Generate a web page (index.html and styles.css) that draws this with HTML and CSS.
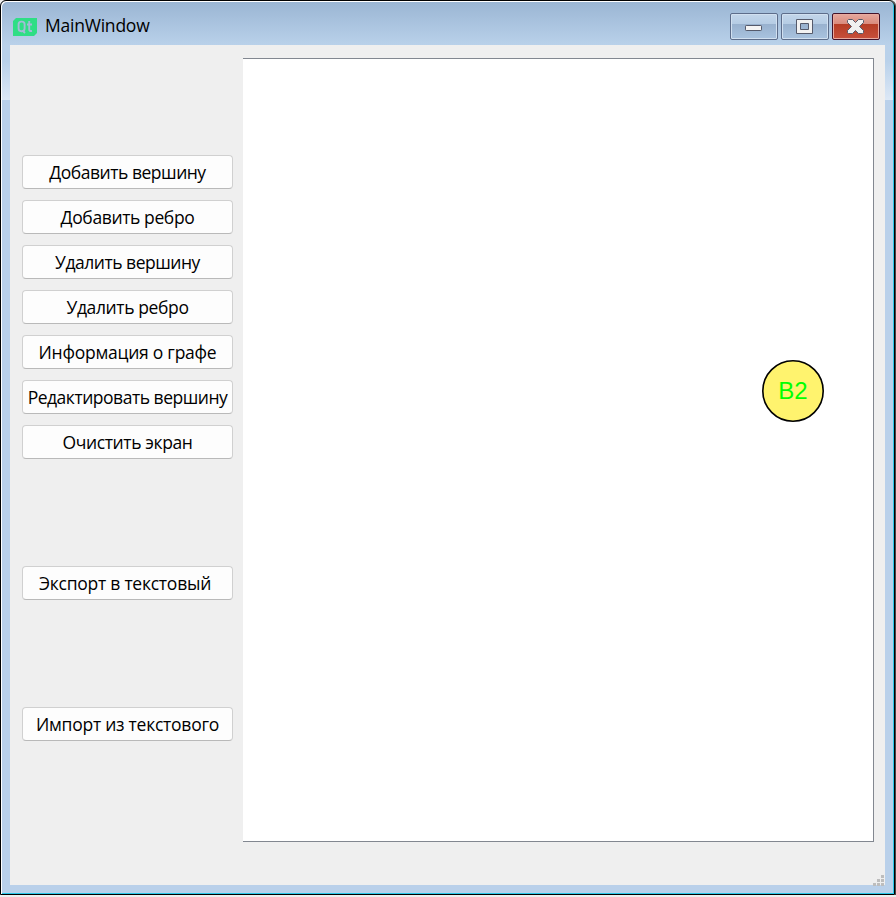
FILE: index.html
```html
<!DOCTYPE html>
<html lang="ru">
<head>
<meta charset="utf-8">
<title>MainWindow</title>
<link rel="stylesheet" href="styles.css">
</head>
<body>
<div class="window">
  <header class="titlebar">
    <svg class="logo" width="24" height="18" viewBox="0 0 24 18">
      <path d="M3 0H24V15L21 18H0V3Z" fill="#2fde85"/>
      <g fill="none" stroke="#a3bcd6" stroke-width="1.9">
        <rect x="5.600" y="3.600" width="6" height="9.600" rx="2.600"/>
        <path d="M9.500 12.500L12 15M16.200 3V11.500Q16.200 13.400 19 13M14 6.500H19"/>
      </g>
    </svg>
    <h1 class="title">MainWindow</h1>
    <div class="controls">
      <button class="control" aria-label="Свернуть">
        <svg width="46" height="25" viewBox="0 0 46 25"><rect x="14.5" y="11.5" width="16" height="5" rx=".7" fill="#f4f4f4" stroke="#555a6b"/></svg>
      </button>
      <button class="control" aria-label="Развернуть">
        <svg width="46" height="25" viewBox="0 0 46 25"><path fill="#f2f2f2" fill-rule="evenodd" stroke="#555a6b" d="M14.5 5.5H30.500V19.500H14.500ZM18.500 9.500V15.500H26.500V9.500Z"/></svg>
      </button>
      <button class="control close" aria-label="Закрыть">
        <svg width="46" height="25" viewBox="0 0 46 25"><path fill="#f0f0f0" stroke="#555a6b" stroke-linejoin="round" d="M15.500 5.500H19.500L22.500 8.500L25.500 5.500H29.500L30.500 6.500V8.500L26.500 12.500L30.500 16.500V18.500L29.500 19.500H25.500L22.500 16.500L19.500 19.500H15.500L14.500 18.500V16.500L18.500 12.500L14.500 8.500V6.500Z"/></svg>
      </button>
    </div>
  </header>
  <main class="content">
    <nav class="sidebar">
      <div class="group">
        <button class="action tight">Добавить вершину</button>
        <button class="action">Добавить ребро</button>
        <button class="action tight">Удалить вершину</button>
        <button class="action">Удалить ребро</button>
        <button class="action loose">Информация о графе</button>
        <button class="action tight">Редактировать вершину</button>
        <button class="action">Очистить экран</button>
      </div>
      <button class="action loose export">Экспорт в текстовый</button>
      <button class="action loose">Импорт из текстового</button>
    </nav>
    <section class="canvas">
      <svg class="node" width="62" height="62" viewBox="0 0 62 62">
        <circle cx="31" cy="31" r="30.200" fill="#fff36e" stroke="#000" stroke-width="1.600"/>
        <text x="31" y="38.500" text-anchor="middle">B2</text>
      </svg>
    </section>
    <svg class="grip" width="11" height="11" viewBox="0 0 11 11" fill="#bdbdbd">
      <path d="M8 0h3v3h-3zM4 4h3v3h-3zM8 4h3v3h-3zM0 8h3v3h-3zM4 8h3v3h-3zM8 8h3v3h-3z"/>
    </svg>
  </main>
</div>
</body>
</html>
```
FILE: styles.css
```css
* { box-sizing: border-box; }

body {
  margin: 0;
  background: #efefef;
}

.window {
  width: 895px;
  height: 895px;
  border: 1px solid #000;
  border-radius: 6px 6px 0 0;
  padding: 0 9px 8px 9px;
  background:
    linear-gradient(#9ab5d3, #b9d1ea 44px, #b9d1ea 60px, #dce8f6 99px, #b9d0ea 99px);
  box-shadow: inset 1px 1px 0 #fff, inset -1px -1px 0 #29c7e8, 1px 0 0 #444;
}

.titlebar {
  display: flex;
  height: 44px;
  padding: 12px 5px 0 3px;
  align-items: flex-start;
}

.logo { margin-top: 5px; }

.title {
  margin: -1px 0 0 8px;
  font: 400 17.500px/26px "Open Sans", "Noto Sans", sans-serif;
  letter-spacing: -.22px;
  color: #000;
}

.controls {
  display: flex;
  gap: 3px;
  margin-left: auto;
}

.control {
  width: 48px;
  height: 27px;
  padding: 0;
  border: 1px solid #5d6d8a;
  border-radius: 2px;
  background: linear-gradient(#c3d6ea, #b5cce4 10px, #98b1ce 10px, #a9c3df);
  box-shadow: inset 0 0 0 1px #d1e0f0;
}

.control svg { display: block; }

.close {
  border-color: #43132a;
  background: linear-gradient(#e5a89e, #d98a7c 10px, #b53c25 10px, #c8503b);
  box-shadow: inset 0 0 0 1px #e8aa9f;
}

.content {
  position: relative;
  display: flex;
  height: 840px;
  padding: 13px 11px 43px 12px;
  background: #efefef;
}

.sidebar {
  width: 211px;
  margin-right: 10px;
  padding-top: 97px;
}

.group {
  display: grid;
  gap: 11px;
}

.action {
  display: block;
  width: 211px;
  height: 34px;
  padding: 0;
  border: 1px solid #d0d0d0;
  border-bottom-color: #b9b9b9;
  border-radius: 4px;
  background: #fdfdfd;
  color: #000;
  font: 400 17.500px/32px "Open Sans", "Noto Sans", sans-serif;
  letter-spacing: -.38px;
  white-space: nowrap;
}

.tight { letter-spacing: -.48px; }

.loose { letter-spacing: -.25px; }

.export {
  margin: 107px 0;
  padding-right: 5px;
}

.canvas {
  position: relative;
  width: 631px;
  border: 1px solid #828790;
  border-left: 0;
  background: #fff;
}

.node {
  position: absolute;
  left: 519px;
  top: 301px;
}

.node text {
  font: 24px "Liberation Sans", Arial, sans-serif;
  fill: #0f0;
}

.grip {
  position: absolute;
  right: 1px;
  bottom: -1px;
}
```
